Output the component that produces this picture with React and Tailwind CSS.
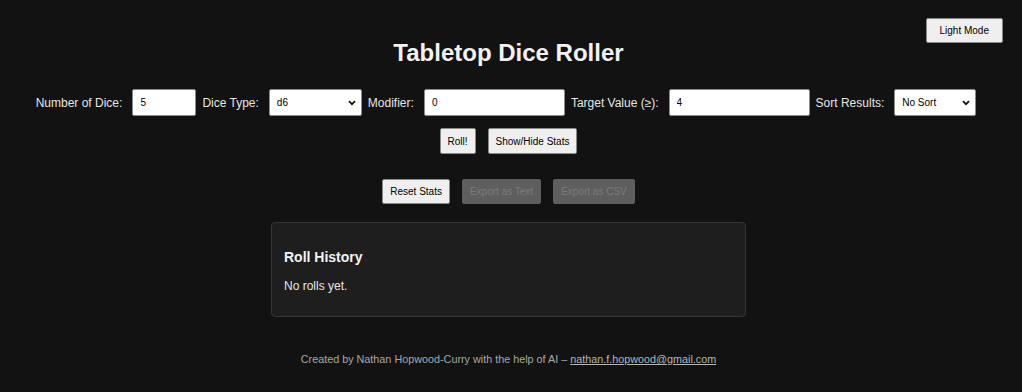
import { useState } from "react";

function Chevron() {
  return (
    <svg className="pointer-events-none absolute right-[6px] top-1/2 -translate-y-1/2" width="8" height="6" viewBox="0 0 8 6">
      <path d="M1 1.2 L4 4.2 L7 1.2" fill="none" stroke="#111" strokeWidth="1.8" />
    </svg>
  );
}

function Field({ label, children, last }) {
  return (
    <div className={"flex items-center " + (last ? "" : "mr-[6px]")}>
      <label className="mr-[10px] text-[12px] text-[#e6e6e6]">{label}</label>
      {children}
    </div>
  );
}

const inputCls =
  "h-[27px] rounded-[2px] border border-[#8a8a8a] bg-white px-[7px] text-[10px] text-black outline-none";

export default function App() {
  const [num, setNum] = useState("5");
  const [dice, setDice] = useState("d6");
  const [mod, setMod] = useState("0");
  const [target, setTarget] = useState("4");
  const [sort, setSort] = useState("none");

  return (
    <div className="relative min-h-[392px] bg-[#121212] font-['Liberation_Sans',Arial,sans-serif] text-[#e6e6e6]">
      <button className="absolute right-[19px] top-[18px] h-[25px] rounded-[2px] border border-[#8a8a8a] bg-[#efefef] px-[13px] text-[10px] text-black">
        Light Mode
      </button>

      <div className="flex flex-col items-center pr-[5px] pt-[39px]">
        <h1 className="text-[24px] font-bold leading-[28px] text-[#f2f2f2]">Tabletop Dice Roller</h1>

        <div className="mt-[22px] flex items-center justify-center pr-[5px]">
          <Field label="Number of Dice:">
            <input className={inputCls + " w-[64px]"} value={num} onChange={(e) => setNum(e.target.value)} />
          </Field>
          <Field label="Dice Type:">
            <div className="relative">
              <select
                className={inputCls + " w-[93px] appearance-none"}
                value={dice}
                onChange={(e) => setDice(e.target.value)}
              >
                <option>d4</option>
                <option>d6</option>
                <option>d8</option>
                <option>d10</option>
                <option>d12</option>
                <option>d20</option>
              </select>
              <Chevron />
            </div>
          </Field>
          <Field label="Modifier:">
            <input className={inputCls + " w-[141px]"} value={mod} onChange={(e) => setMod(e.target.value)} />
          </Field>
          <Field label="Target Value (≥):">
            <input className={inputCls + " w-[141px]"} value={target} onChange={(e) => setTarget(e.target.value)} />
          </Field>
          <Field label="Sort Results:" last>
            <div className="relative">
              <select
                className={inputCls + " w-[82px] appearance-none"}
                value={sort}
                onChange={(e) => setSort(e.target.value)}
              >
                <option value="none">No Sort</option>
                <option value="asc">Ascending</option>
                <option value="desc">Descending</option>
              </select>
              <Chevron />
            </div>
          </Field>
        </div>

        <div className="mt-[12px] flex gap-[12px]">
          <button className="h-[26px] rounded-[2px] border border-[#8a8a8a] bg-[#efefef] px-[7px] text-[10px] text-black">
            Roll!
          </button>
          <button className="h-[26px] rounded-[2px] border border-[#8a8a8a] bg-[#efefef] px-[7px] text-[10px] text-black">
            Show/Hide Stats
          </button>
        </div>

        <div className="mt-[25px] flex gap-[12px]">
          <button className="h-[25px] rounded-[2px] border border-[#8a8a8a] bg-[#efefef] px-[7px] text-[10px] text-black">
            Reset Stats
          </button>
          <button disabled className="h-[25px] rounded-[2px] border border-[#5e5e5e] bg-[#5e5e5e] px-[7px] text-[10px] text-[#7b7b7b]">
            Export as Text
          </button>
          <button disabled className="h-[25px] rounded-[2px] border border-[#5e5e5e] bg-[#5e5e5e] px-[7px] text-[10px] text-[#7b7b7b]">
            Export as CSV
          </button>
        </div>

        <div className="mt-[18px] w-[475px] rounded-[4px] border border-[#363636] bg-[#1e1e1e] px-[12px] pb-[23px] pt-[26px]">
          <h3 className="text-[14px] font-bold leading-[16px] text-[#f2f2f2]">Roll History</h3>
          <p className="mt-[14px] text-[12px] leading-[14px] text-[#e6e6e6]">No rolls yet.</p>
        </div>

        <p className="mt-[35px] text-[10.8px] leading-[14px] text-[#a8a8a8]">
          Created by Nathan Hopwood-Curry with the help of AI –{" "}
          <a href="#" className="text-[#b5b5b5] underline">
            nathan.f.hopwood@gmail.com
          </a>
        </p>
      </div>
    </div>
  );
}
